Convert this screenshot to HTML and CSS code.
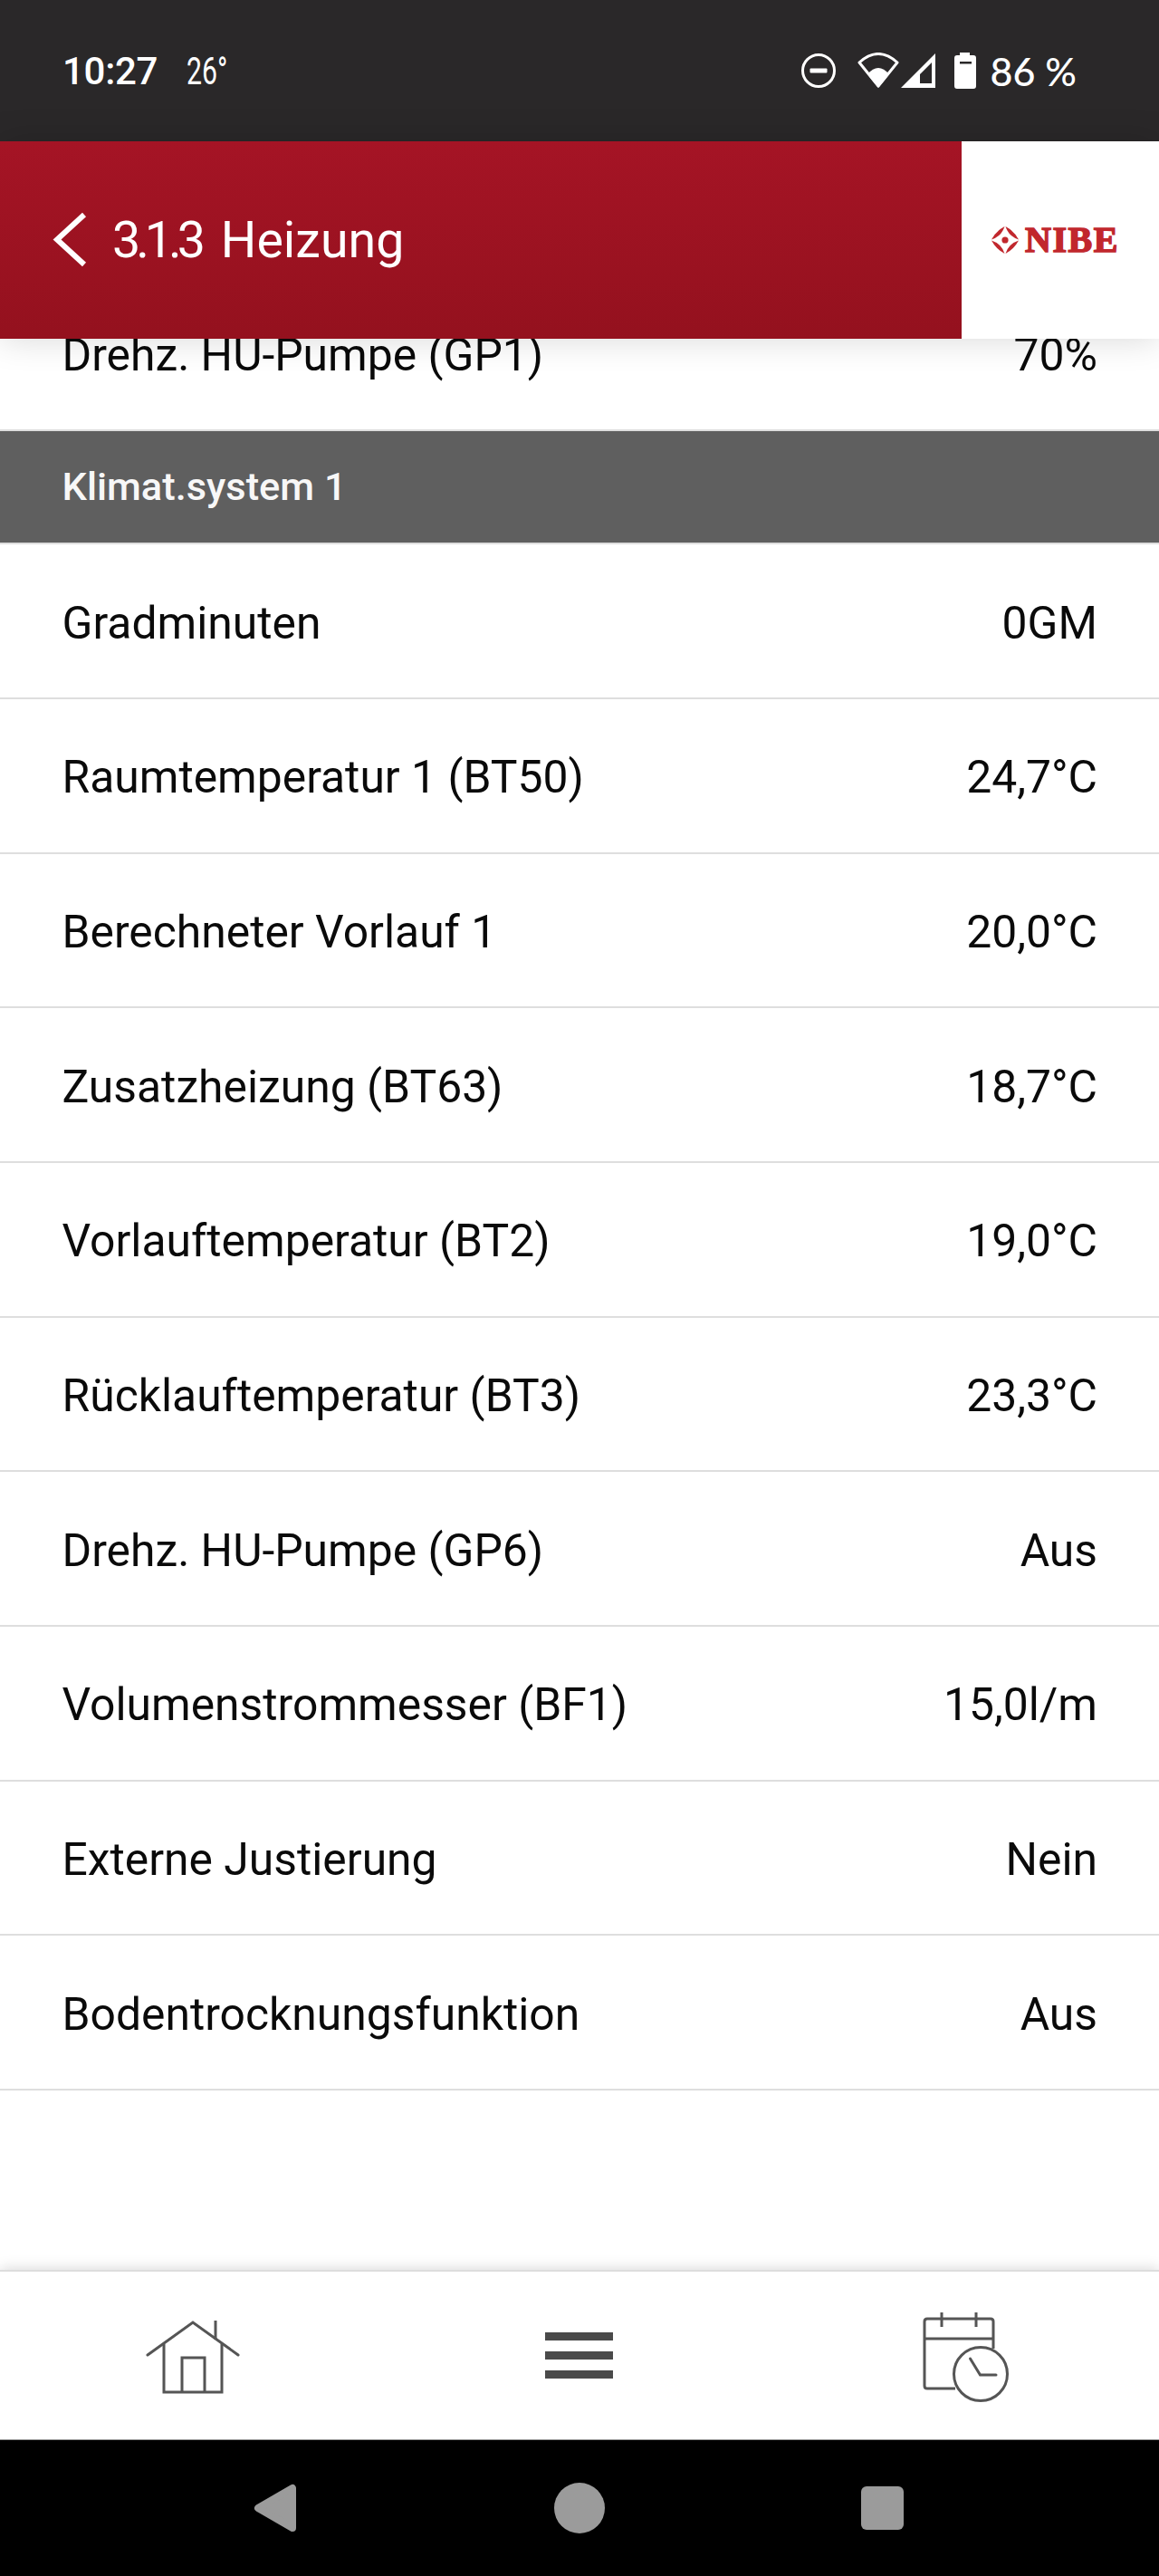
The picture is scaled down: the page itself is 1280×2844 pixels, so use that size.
FILE: index.html
```html
<!DOCTYPE html>
<html lang="de">
  <head>
    <meta charset="utf-8">
    <title>3.1.3 Heizung</title>
    <link rel="stylesheet" href="styles.css">
  </head>
  <body>
    <div class="phone">
      <!-- Status bar -->
      <div class="status-bar">
        <div class="status-left">
          <span class="status-time">10:27</span>
          <span class="status-temp">26°</span>
        </div>
        <div class="status-right">
          <svg class="icon-dnd" width="40" height="40" viewBox="0 0 40 40">
            <circle cx="20" cy="20" r="17.5" fill="none" stroke="#fff" stroke-width="3"/>
            <rect x="10.5" y="17.5" width="19" height="5" rx="1" fill="#fff"/>
          </svg>
          <svg class="icon-wifi" width="46" height="40" viewBox="0 0 46 40">
            <path d="M2 11 Q23 -8 44 11 L23 37 Z" fill="none" stroke="#fff" stroke-width="3" stroke-linejoin="round"/>
            <path d="M11 24 Q23 10 35 24 L23 39 Z" fill="#fff"/>
          </svg>
          <svg class="icon-signal" width="38" height="38" viewBox="0 0 38 38">
            <path fill-rule="evenodd" d="M0 38 L38 0 V38 Z M21 33 H34 V10 L21 23 Z" fill="#fff"/>
          </svg>
          <svg class="icon-battery" width="24" height="40" viewBox="0 0 24 40">
            <path d="M6 0 H17 V3 H21 Q24 3 24 6 V37 Q24 40 21 40 H3 Q0 40 0 37 V6 Q0 3 3 3 H6 Z" fill="#fff"/>
            <rect x="6" y="10" width="13" height="2.5" fill="#2a2829"/>
          </svg>
          <span class="status-battery">86 %</span>
        </div>
      </div>

      <!-- Header -->
      <div class="app-header">
        <div class="header-title">
          <svg class="icon-back" width="40" height="62" viewBox="0 0 40 62">
            <path d="M36 3 L6 30.5 L36 58" fill="none" stroke="#fff" stroke-width="6"/>
          </svg>
          <span class="title-number">3.1.3</span>
          <span class="title-name">Heizung</span>
        </div>
        <div class="header-logo">
          <svg width="30" height="30" viewBox="0 0 30 30">
            <g fill="#c1272d">
              <circle cx="15" cy="15" r="3.6"/>
              <path d="M0 14.5 Q11 11 14.5 0 Q5 5 0 14.5 Z"/>
              <path d="M30 14.5 Q19 11 15.5 0 Q25 5 30 14.5 Z"/>
              <path d="M0 15.5 Q11 19 14.5 30 Q5 25 0 15.5 Z"/>
              <path d="M30 15.5 Q19 19 15.5 30 Q25 25 30 15.5 Z"/>
            </g>
          </svg>
          <span class="logo-text">NIBE</span>
        </div>
      </div>

      <!-- Scrolled value list -->
      <div class="content">
        <div class="value-list">
          <div class="value-row"><span>Drehz. HU-Pumpe (GP1)</span><span>70%</span></div>
          <div class="section-head">Klimat.system 1</div>
          <div class="value-row"><span>Gradminuten</span><span>0GM</span></div>
          <div class="value-row"><span>Raumtemperatur 1 (BT50)</span><span>24,7°C</span></div>
          <div class="value-row"><span>Berechneter Vorlauf 1</span><span>20,0°C</span></div>
          <div class="value-row"><span>Zusatzheizung (BT63)</span><span>18,7°C</span></div>
          <div class="value-row"><span>Vorlauftemperatur (BT2)</span><span>19,0°C</span></div>
          <div class="value-row"><span>Rücklauftemperatur (BT3)</span><span>23,3°C</span></div>
          <div class="value-row"><span>Drehz. HU-Pumpe (GP6)</span><span>Aus</span></div>
          <div class="value-row"><span>Volumenstrommesser (BF1)</span><span>15,0l/m</span></div>
          <div class="value-row"><span>Externe Justierung</span><span>Nein</span></div>
          <div class="value-row"><span>Bodentrocknungsfunktion</span><span>Aus</span></div>
        </div>
      </div>

      <!-- Bottom tabs -->
      <div class="tab-bar">
        <div class="tab">
          <svg width="104" height="84" viewBox="0 0 104 84" fill="none" stroke="#555" stroke-width="3">
            <path d="M2 41 L52 5 L102 41" stroke-linecap="round"/>
            <path d="M20 29 V82 H84 V29"/>
            <path d="M40 82 V44 H65 V82"/>
            <path d="M77 3 V24"/>
          </svg>
        </div>
        <div class="tab">
          <div class="menu-icon">
            <div class="menu-bar"></div>
            <div class="menu-bar"></div>
            <div class="menu-bar"></div>
          </div>
        </div>
        <div class="tab">
          <svg width="96" height="104" viewBox="0 0 96 104" fill="none" stroke="#555" stroke-width="3">
            <path d="M36 88 H5 Q2 88 2 85 V14 Q2 11 5 11 H75 Q78 11 78 14 V44"/>
            <path d="M2 33 H78"/>
            <path d="M21 4 V20 M59 4 V20"/>
            <circle cx="64" cy="72" r="29.5"/>
            <path d="M52.5 55 L63.5 73 H81" stroke-linecap="round"/>
          </svg>
        </div>
      </div>

      <!-- Android navigation -->
      <div class="nav-bar">
        <svg width="48" height="54" viewBox="0 0 48 54">
          <path d="M5 27 L43 5 V49 Z" fill="#9b9b9b" stroke="#9b9b9b" stroke-width="8" stroke-linejoin="round"/>
        </svg>
        <div class="nav-circle"></div>
        <div class="nav-square"></div>
      </div>
    </div>
  </body>
</html>
```

FILE: styles.css
```css
body {
  margin: 0;
  background: #fff;
  font-family: Roboto, "Liberation Sans", sans-serif;
}

.phone {
  width: 1280px;
  height: 2844px;
  display: flex;
  flex-direction: column;
  overflow: hidden;
}

/* Status bar */
.status-bar {
  height: 156px;
  flex: none;
  display: flex;
  align-items: center;
  justify-content: space-between;
  padding: 0 91px 0 69px;
  background: #2a2829;
  color: #fff;
}

.status-left {
  display: flex;
  align-items: center;
}

.status-time {
  font-size: 42px;
  font-weight: 500;
  letter-spacing: -0.3px;
}

.status-temp {
  display: inline-block;
  margin-left: 32px;
  font-size: 42px;
  transform: scaleX(0.72);
  transform-origin: left center;
}

.status-right {
  display: flex;
  align-items: center;
}

.icon-wifi {
  margin-left: 23px;
}

.icon-signal {
  margin-left: 2px;
}

.icon-battery {
  margin-left: 21px;
}

.status-battery {
  margin-left: 16px;
  font-family: Lato, Roboto, sans-serif;
  font-size: 43px;
  font-weight: 500;
}

/* Header */
.app-header {
  position: relative;
  z-index: 2;
  height: 218px;
  flex: none;
  display: flex;
  box-shadow: 0 0 36px rgba(0, 0, 0, 0.16);
}

.header-title {
  flex: 1;
  display: flex;
  align-items: center;
  padding-left: 57px;
  background: linear-gradient(#a51425, #94111e);
  color: #fff;
  font-size: 55.5px;
}

.title-number {
  margin-left: 27px;
  letter-spacing: -5px;
}

.title-name {
  margin-left: 22px;
}

.header-logo {
  width: 218px;
  display: flex;
  align-items: center;
  padding-left: 33px;
  box-sizing: border-box;
  background: #fff;
}

.logo-text {
  margin-left: 7px;
  font-family: "Liberation Serif", serif;
  font-size: 40px;
  font-weight: 700;
  line-height: 1;
  letter-spacing: 1.5px;
  color: #c1272d;
  -webkit-text-stroke: 1.5px #c1272d;
}

/* Value list */
.content {
  flex: 1;
  overflow: hidden;
  background: #fff;
}

.value-list {
  margin-top: -68.67px;
}

.value-row {
  height: 170.67px;
  box-sizing: border-box;
  display: flex;
  align-items: center;
  justify-content: space-between;
  padding: 4px 68px 0 68.5px;
  border-bottom: 2.67px solid #dedede;
  font-size: 49.8px;
  color: #0a0a0a;
}

.section-head {
  height: 125.33px;
  box-sizing: border-box;
  display: flex;
  align-items: center;
  padding: 0 68.5px;
  background: #5f5f5f;
  border-bottom: 2.67px solid #dedede;
  font-size: 43.4px;
  font-weight: 500;
  color: #f7f7f7;
}

/* Bottom tabs */
.tab-bar {
  position: relative;
  z-index: 2;
  height: 188px;
  flex: none;
  display: grid;
  grid-template-columns: repeat(3, 1fr);
  box-sizing: border-box;
  background: #fff;
  border-top: 2px solid #ddd;
  border-bottom: 1px solid #999;
  box-shadow: 0 -2px 14px rgba(0, 0, 0, 0.14);
}

.tab {
  display: flex;
  align-items: center;
  justify-content: center;
}

.menu-icon {
  display: flex;
  flex-direction: column;
  gap: 12.5px;
  width: 75px;
}

.menu-bar {
  height: 8.5px;
  background: #4a4a4a;
}

/* Android navigation */
.nav-bar {
  height: 150px;
  flex: none;
  display: flex;
  align-items: center;
  justify-content: space-between;
  padding: 0 282px 0 280px;
  box-sizing: border-box;
  background: #000;
}

.nav-circle {
  width: 56px;
  height: 56px;
  border-radius: 50%;
  background: #9b9b9b;
}

.nav-square {
  width: 47px;
  height: 48px;
  border-radius: 6px;
  background: #9b9b9b;
}
```
